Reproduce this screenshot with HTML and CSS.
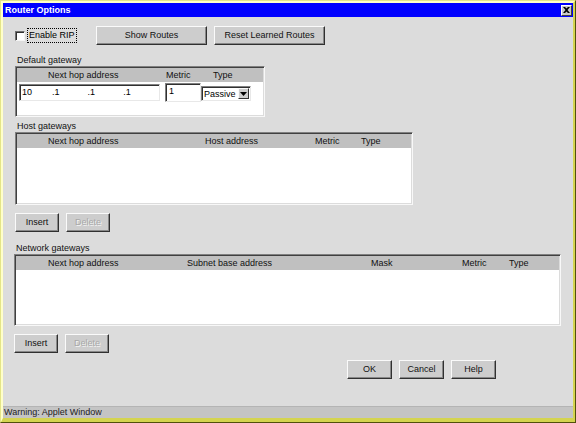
FILE: index.html
```html
<!DOCTYPE html>
<html>
<head>
<meta charset="utf-8">
<title>Router Options</title>
<link rel="stylesheet" href="styles.css">
</head>
<body>
<div class="window">
  <div class="frame">
    <div class="titlebar">
      <span class="title">Router Options</span>
      <span class="close"><svg width="7" height="6" viewBox="0 0 7 6"><path d="M0 0h2l1.5 1.5L5 0h2L4.5 3 7 6H5L3.5 4.5 2 6H0l2.5-3z" fill="#000"/></svg></span>
    </div>
    <div class="content">
      <div class="row-top">
        <div class="check-group">
          <span class="checkbox"></span>
          <span class="check-label">Enable RIP</span>
        </div>
        <div class="btn btn-wide">Show Routes</div>
        <div class="btn btn-wide">Reset Learned Routes</div>
      </div>

      <div class="section-label first">Default gateway</div>
      <div class="panel panel-dg">
        <div class="thead cols-dg">
          <span>Next hop address</span><span>Metric</span><span>Type</span>
        </div>
        <div class="dg-body">
          <div class="field ip">
            <span class="seg seg1">10</span><span class="seg">.1</span><span class="seg">.1</span><span class="seg">.1</span>
          </div>
          <div class="field metric">1</div>
          <div class="select">
            <span class="select-text">Passive</span>
            <span class="select-arrow"><svg width="7" height="4" viewBox="0 0 7 4"><path d="M0 0h7L3.5 4z" fill="#000"/></svg></span>
          </div>
        </div>
      </div>

      <div class="section-label second">Host gateways</div>
      <div class="panel panel-host">
        <div class="thead cols-host">
          <span>Next hop address</span><span>Host address</span><span>Metric</span><span>Type</span>
        </div>
      </div>
      <div class="btn-row">
        <div class="btn btn-small">Insert</div>
        <div class="btn btn-small disabled">Delete</div>
      </div>

      <div class="section-label third">Network gateways</div>
      <div class="panel panel-net">
        <div class="thead cols-net">
          <span>Next hop address</span><span>Subnet base address</span><span>Mask</span><span>Metric</span><span>Type</span>
        </div>
      </div>
      <div class="btn-row net-row">
        <div class="btn btn-small">Insert</div>
        <div class="btn btn-small disabled">Delete</div>
      </div>

      <div class="dialog-row">
        <div class="btn btn-dlg">OK</div>
        <div class="btn btn-dlg">Cancel</div>
        <div class="btn btn-dlg">Help</div>
      </div>
    </div>
    <div class="statusbar">Warning: Applet Window</div>
  </div>
</div>
</body>
</html>
```

FILE: styles.css
```css
html, body {
  margin: 0;
  padding: 0;
}
body {
  width: 576px;
  height: 423px;
  overflow: hidden;
  font-family: "Liberation Sans", Arial, sans-serif;
  font-size: 9px;
  color: #000;
  background: #dcdcdc;
}
.window {
  width: 576px;
  height: 423px;
  box-sizing: border-box;
  border: 1px solid;
  border-color: #e4e488 #50500c #50500c #e4e488;
}
.frame {
  height: 100%;
  box-sizing: border-box;
  border-style: solid;
  border-width: 2px 2px 4px 2px;
  border-color: #ffffc8 #d4d450 #d4d450 #ffffc8;
  display: flex;
  flex-direction: column;
  background: #dcdcdc;
}
.titlebar {
  height: 14px;
  background: #0000ff;
  display: flex;
  align-items: center;
  justify-content: space-between;
  padding: 0 1px 0 2px;
}
.title {
  color: #fff;
  font-weight: bold;
  font-size: 9px;
  line-height: 14px;
}
.close {
  width: 11px;
  height: 11px;
  box-sizing: border-box;
  background: #c8c8c8;
  border: 1px solid;
  border-color: #fff #404040 #404040 #fff;
  display: flex;
  align-items: center;
  justify-content: center;
}
.content {
  flex: 1;
  padding: 9px 0 0 12px;
  display: flex;
  flex-direction: column;
  align-items: flex-start;
}
.row-top {
  display: flex;
  align-items: center;
  height: 19px;
}
.check-group {
  width: 81px;
  display: flex;
  align-items: center;
}
.checkbox {
  width: 10px;
  height: 10px;
  box-sizing: border-box;
  background: #fff;
  border: 1px solid;
  border-color: #707070 #f4f4f4 #f4f4f4 #707070;
  box-shadow: inset 1px 1px #303030;
}
.check-label {
  margin-left: 2px;
  padding: 0 1px;
  height: 13px;
  line-height: 13px;
  border: 1px dotted #000;
}
.btn {
  height: 19px;
  box-sizing: border-box;
  background: #cdcdcd;
  border: 1px solid;
  border-color: #fafafa #303030 #303030 #fafafa;
  box-shadow: inset -1px -1px #888;
  display: flex;
  align-items: center;
  justify-content: center;
  line-height: 17px;
  color: #111;
}
.btn-wide {
  width: 111px;
  margin-right: 7px;
}
.btn-small {
  width: 44px;
}
.btn-dlg {
  width: 45px;
}
.disabled {
  color: #a8a8a8;
  text-shadow: 1px 1px #f4f4f4;
}
.section-label {
  height: 11px;
  line-height: 11px;
  padding-left: 2px;
  color: #111;
}
.section-label.first { margin-top: 10px; }
.section-label.second { margin-top: 4px; }
.section-label.third { margin-top: 11px; margin-left: -1px; }
.panel {
  box-sizing: border-box;
  background: #fff;
  border: 1px solid;
  border-color: #808080 #f8f8f8 #f8f8f8 #808080;
  box-shadow: inset 1px 1px #404040, inset -1px -1px #dcdcdc;
  padding: 1px 1px 0 1px;
}
.panel-dg {
  width: 250px;
  height: 51px;
}
.panel-host {
  width: 398px;
  height: 73px;
}
.panel-net {
  width: 547px;
  height: 72px;
  margin-left: -1px;
}
.thead {
  height: 14px;
  line-height: 14px;
  background: #c0c0c0;
  display: grid;
  color: #111;
}
.cols-dg {
  padding-left: 31px;
  grid-template-columns: 118px 47px 1fr;
}
.cols-host {
  padding-left: 31px;
  grid-template-columns: 157px 110px 46px 1fr;
}
.cols-net {
  padding-left: 32px;
  grid-template-columns: 139px 184px 91px 47px 1fr;
}
.dg-body {
  display: flex;
  align-items: flex-start;
  padding-left: 2px;
}
.field {
  box-sizing: border-box;
  background: #fff;
  border: 1px solid;
  border-color: #808080 #e8e8e8 #e8e8e8 #808080;
  box-shadow: inset 1px 1px #303030;
}
.ip {
  width: 141px;
  height: 17px;
  margin-top: 2px;
  display: flex;
  align-items: center;
  padding-left: 2px;
  line-height: 15px;
}
.seg {
  width: 37px;
}
.seg1 {
  width: 31px;
}
.metric {
  width: 36px;
  height: 19px;
  margin-top: 1px;
  margin-left: 5px;
  padding-left: 3px;
  line-height: 15px;
}
.select {
  width: 50px;
  height: 15px;
  margin-top: 4px;
  box-sizing: border-box;
  background: #fff;
  border: 1px solid;
  border-color: #808080 #e8e8e8 #e8e8e8 #808080;
  box-shadow: inset 1px 1px #303030;
  display: flex;
  align-items: center;
  justify-content: space-between;
  padding: 1px 1px 1px 2px;
}
.select-text {
  line-height: 12px;
}
.select-arrow {
  width: 11px;
  height: 11px;
  box-sizing: border-box;
  background: #cdcdcd;
  border: 1px solid;
  border-color: #fafafa #303030 #303030 #fafafa;
  display: flex;
  align-items: center;
  justify-content: center;
}
.btn-row {
  display: flex;
  gap: 7px;
  margin-top: 8px;
}
.net-row {
  margin-left: -1px;
}
.dialog-row {
  display: flex;
  gap: 7px;
  margin-top: 7px;
  margin-left: 332px;
}
.statusbar {
  height: 11px;
  line-height: 11px;
  background: #c4c4c4;
  border-top: 1px solid #b4b4b4;
  padding-left: 1px;
  color: #222;
}
```
